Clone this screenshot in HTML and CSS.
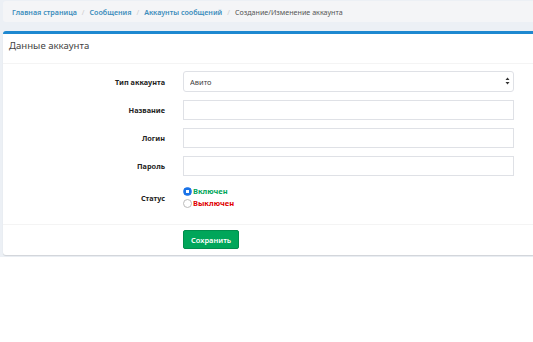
FILE: index.html
```html
<!DOCTYPE html>
<html lang="ru">
<head>
    <meta charset="UTF-8">
    <meta name="viewport" content="width=device-width, initial-scale=1.0">
    <title>Создание/Изменение аккаунта</title>
    <link rel="stylesheet" href="styles.css">
</head>
<body>
    <div class="content-wrapper">
        <ol class="breadcrumb">
            <li><a href="#">Главная страница</a></li>
            <li><a href="#">Сообщения</a></li>
            <li><a href="#">Аккаунты сообщений</a></li>
            <li class="active">Создание/Изменение аккаунта</li>
        </ol>

        <div class="box">
            <div class="box-header">
                <h3>Данные аккаунта</h3>
            </div>
            <form class="form-horizontal">
                <div class="box-body">
                    <div class="form-group">
                        <label for="type">Тип аккаунта</label>
                        <div class="select-wrap">
                            <select id="type" class="form-control">
                                <option>Авито</option>
                            </select>
                            <span class="arrows">
                                <svg width="5" height="8" viewBox="0 0 5 8"><path d="M2.5 0.5 L4.5 3 H0.5 Z M2.5 7.5 L4.5 5 H0.5 Z" fill="#333"/></svg>
                            </span>
                        </div>
                    </div>
                    <div class="form-group">
                        <label for="name">Название</label>
                        <input type="text" id="name" class="form-control">
                    </div>
                    <div class="form-group">
                        <label for="login">Логин</label>
                        <input type="text" id="login" class="form-control">
                    </div>
                    <div class="form-group">
                        <label for="password">Пароль</label>
                        <input type="password" id="password" class="form-control">
                    </div>
                    <div class="form-group status">
                        <label>Статус</label>
                        <div class="radios">
                            <div class="radio on"><span class="dot"></span><span class="green">Включен</span></div>
                            <div class="radio"><span class="dot"></span><span class="red">Выключен</span></div>
                        </div>
                    </div>
                </div>
                <div class="box-footer">
                    <div></div>
                    <div><button type="submit" class="btn-success">Сохранить</button></div>
                </div>
            </form>
        </div>
    </div>
</body>
</html>
```

FILE: styles.css
```css
body {
    margin: 0;
    font-family: "Noto Sans", Arial, sans-serif;
    font-size: 8px;
    color: #333;
    background-color: #fff;
}
.content-wrapper {
    background-color: #ecf0f5;
    padding: 1px 0 2px 3px;
}
.breadcrumb {
    list-style: none;
    margin: 0;
    padding: 0 9px;
    height: 21px;
    display: flex;
    align-items: center;
    font-size: 7.15px;
    background-color: #f4f5f7;
    border-radius: 3px 0 0 3px;
}
.breadcrumb li + li:before {
    content: "/";
    color: #ccc;
    padding: 0 5px;
}
.breadcrumb a {
    color: #3c8dbc;
    text-decoration: none;
    font-weight: 600;
}
.breadcrumb .active {
    color: #555;
}
.box {
    margin-top: 9px;
    background-color: #fff;
    border-top: 3px solid #1e88d0;
    border-radius: 3px 0 0 3px;
    box-shadow: 0 1px 1px rgba(0, 0, 0, 0.12);
}
.box-header {
    height: 30px;
    padding: 0 6px 6px;
    box-sizing: border-box;
    display: flex;
    align-items: center;
    border-bottom: 1px solid #f4f4f4;
}
.box-header h3 {
    margin: 0;
    font-size: 9.6px;
    font-weight: normal;
    color: #444;
}
.box-body {
    padding: 7px 19px 16px 10px;
    display: flex;
    flex-direction: column;
    gap: 8px;
}
.form-group {
    display: grid;
    grid-template-columns: 152px 1fr;
    column-gap: 18px;
    align-items: center;
}
.form-group label {
    text-align: right;
    font-weight: bold;
    font-size: 7.3px;
    color: #222;
}
.form-control {
    display: block;
    width: 100%;
    height: 20px;
    box-sizing: border-box;
    border: 1px solid #dfe1e6;
    border-radius: 0;
    background-color: #fff;
    font-family: inherit;
    font-size: 7.5px;
    padding: 0 6px;
    margin: 0;
    outline: none;
}
.select-wrap {
    position: relative;
}
select.form-control {
    -webkit-appearance: none;
    appearance: none;
    height: 21px;
    border-radius: 3px;
    color: #444;
}
.arrows {
    position: absolute;
    right: 4px;
    top: 6px;
    line-height: 0;
}
.status {
    align-items: start;
    margin-top: 3px;
}
.status label {
    padding-top: 6px;
}
.radios {
    display: flex;
    flex-direction: column;
    gap: 3px;
}
.radio {
    display: flex;
    align-items: center;
    gap: 1px;
    font-weight: bold;
    font-size: 7.5px;
    line-height: 9px;
}
.dot {
    width: 7px;
    height: 7px;
    border: 1px solid #bbb;
    border-radius: 50%;
    background-color: #fff;
}
.radio.on .dot {
    border-color: #1a73e8;
    background: radial-gradient(circle, #fff 0 1.5px, #1a73e8 2px);
}
.green {
    color: #00a65a;
}
.red {
    color: #e00000;
}
.box-footer {
    border-top: 1px solid #f4f4f4;
    padding: 5px 19px 6px 10px;
    display: grid;
    grid-template-columns: 152px 1fr;
    column-gap: 18px;
}
.btn-success {
    background-color: #00a65a;
    border: 1px solid #008d4c;
    border-radius: 2px;
    color: #fff;
    font-family: inherit;
    font-size: 7.5px;
    font-weight: 600;
    height: 19px;
    padding: 0 7px;
    cursor: pointer;
}
```
